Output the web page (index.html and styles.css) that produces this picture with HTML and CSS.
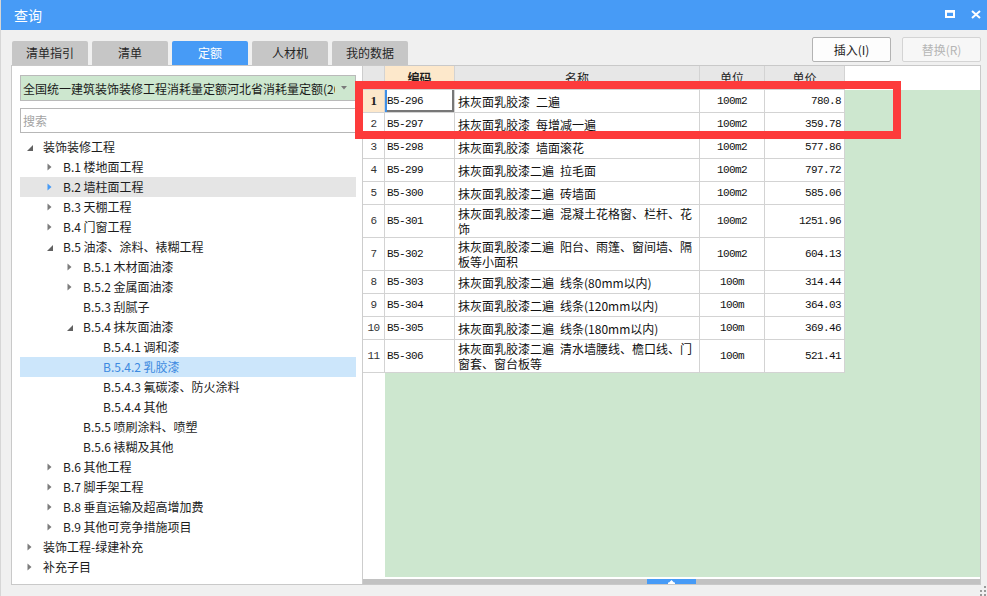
FILE: index.html
```html
<!DOCTYPE html>
<html lang="zh-CN">
<head>
<meta charset="utf-8">
<title>查询</title>
<link rel="stylesheet" href="styles.css">
</head>
<body>
<div class="app">
  <header class="titlebar">
    <span class="title">查询</span>
    <div class="win-btns">
      <svg class="ic-max" width="10" height="8" viewBox="0 0 10 8"><rect x="1" y="1.5" width="8" height="5.5" fill="none" stroke="#fff" stroke-width="2"/><rect x="0" y="0" width="10" height="2.5" fill="#fff"/></svg>
      <svg class="ic-close" width="10" height="9" viewBox="0 0 10 9"><path d="M1 1L9 8M9 1L1 8" stroke="#fff" stroke-width="2" fill="none"/></svg>
    </div>
  </header>

  <div class="toolbar">
    <div class="tabs">
      <div class="tab">清单指引</div>
      <div class="tab">清单</div>
      <div class="tab active">定额</div>
      <div class="tab">人材机</div>
      <div class="tab">我的数据</div>
    </div>
    <div class="btns">
      <div class="btn">插入(I)</div>
      <div class="btn disabled">替换(R)</div>
    </div>
  </div>

  <main class="content">
    <aside class="left">
      <div class="dropdown">
        <span class="dd-text">全国统一建筑装饰装修工程消耗量定额河北省消耗量定额(2012)</span>
        <span class="dd-arrow"><svg width="6" height="4" viewBox="0 0 6 4"><path d="M0 0H6L3 3.5Z" fill="#7a7a7a"/></svg></span>
      </div>
      <div class="search">搜索</div>
      <ul class="tree">
        <li class="node l0"><span class="tg"><svg class="exp" width="6" height="6" viewBox="0 0 6 6"><path d="M6 0V6H0Z"/></svg></span>装饰装修工程</li>
        <li class="node l1"><span class="tg"><svg class="col" width="5" height="8" viewBox="0 0 5 8"><path d="M0.5 0.5L4.5 4L0.5 7.5Z"/></svg></span>B.1 楼地面工程</li>
        <li class="node l1 hover"><span class="tg"><svg class="col" width="5" height="8" viewBox="0 0 5 8"><path d="M0.5 0.5L4.5 4L0.5 7.5Z"/></svg></span>B.2 墙柱面工程</li>
        <li class="node l1"><span class="tg"><svg class="col" width="5" height="8" viewBox="0 0 5 8"><path d="M0.5 0.5L4.5 4L0.5 7.5Z"/></svg></span>B.3 天棚工程</li>
        <li class="node l1"><span class="tg"><svg class="col" width="5" height="8" viewBox="0 0 5 8"><path d="M0.5 0.5L4.5 4L0.5 7.5Z"/></svg></span>B.4 门窗工程</li>
        <li class="node l1"><span class="tg"><svg class="exp" width="6" height="6" viewBox="0 0 6 6"><path d="M6 0V6H0Z"/></svg></span>B.5 油漆、涂料、裱糊工程</li>
        <li class="node l2"><span class="tg"><svg class="col" width="5" height="8" viewBox="0 0 5 8"><path d="M0.5 0.5L4.5 4L0.5 7.5Z"/></svg></span>B.5.1 木材面油漆</li>
        <li class="node l2"><span class="tg"><svg class="col" width="5" height="8" viewBox="0 0 5 8"><path d="M0.5 0.5L4.5 4L0.5 7.5Z"/></svg></span>B.5.2 金属面油漆</li>
        <li class="node l2"><span class="tg"></span>B.5.3 刮腻子</li>
        <li class="node l2"><span class="tg"><svg class="exp" width="6" height="6" viewBox="0 0 6 6"><path d="M6 0V6H0Z"/></svg></span>B.5.4 抹灰面油漆</li>
        <li class="node l3"><span class="tg"></span>B.5.4.1 调和漆</li>
        <li class="node l3 selected"><span class="tg"></span>B.5.4.2 乳胶漆</li>
        <li class="node l3"><span class="tg"></span>B.5.4.3 氟碳漆、防火涂料</li>
        <li class="node l3"><span class="tg"></span>B.5.4.4 其他</li>
        <li class="node l2"><span class="tg"></span>B.5.5 喷刷涂料、喷塑</li>
        <li class="node l2"><span class="tg"></span>B.5.6 裱糊及其他</li>
        <li class="node l1"><span class="tg"><svg class="col" width="5" height="8" viewBox="0 0 5 8"><path d="M0.5 0.5L4.5 4L0.5 7.5Z"/></svg></span>B.6 其他工程</li>
        <li class="node l1"><span class="tg"><svg class="col" width="5" height="8" viewBox="0 0 5 8"><path d="M0.5 0.5L4.5 4L0.5 7.5Z"/></svg></span>B.7 脚手架工程</li>
        <li class="node l1"><span class="tg"><svg class="col" width="5" height="8" viewBox="0 0 5 8"><path d="M0.5 0.5L4.5 4L0.5 7.5Z"/></svg></span>B.8 垂直运输及超高增加费</li>
        <li class="node l1"><span class="tg"><svg class="col" width="5" height="8" viewBox="0 0 5 8"><path d="M0.5 0.5L4.5 4L0.5 7.5Z"/></svg></span>B.9 其他可竞争措施项目</li>
        <li class="node l0"><span class="tg"><svg class="col" width="5" height="8" viewBox="0 0 5 8"><path d="M0.5 0.5L4.5 4L0.5 7.5Z"/></svg></span>装饰工程-绿建补充</li>
        <li class="node l0"><span class="tg"><svg class="col" width="5" height="8" viewBox="0 0 5 8"><path d="M0.5 0.5L4.5 4L0.5 7.5Z"/></svg></span>补充子目</li>
      </ul>
    </aside>

    <section class="right">
      <div class="row thead">
        <div class="c hnum"></div>
        <div class="c hsel">编码</div>
        <div class="c">名称</div>
        <div class="c">单位</div>
        <div class="c">单价</div>
        <div class="c ext"></div>
      </div>
      <div class="tbody">
        <div class="row">
          <div class="c num cur">1</div><div class="c code active">B5-296</div><div class="c name">抹灰面乳胶漆&ensp;二遍</div><div class="c unit">100m2</div><div class="c price">780.8</div><div class="c ext"></div>
        </div>
        <div class="row">
          <div class="c num">2</div><div class="c code">B5-297</div><div class="c name">抹灰面乳胶漆&ensp;每增减一遍</div><div class="c unit">100m2</div><div class="c price">359.78</div><div class="c ext"></div>
        </div>
        <div class="row">
          <div class="c num">3</div><div class="c code">B5-298</div><div class="c name">抹灰面乳胶漆&ensp;墙面滚花</div><div class="c unit">100m2</div><div class="c price">577.86</div><div class="c ext"></div>
        </div>
        <div class="row">
          <div class="c num">4</div><div class="c code">B5-299</div><div class="c name">抹灰面乳胶漆二遍&ensp;拉毛面</div><div class="c unit">100m2</div><div class="c price">797.72</div><div class="c ext"></div>
        </div>
        <div class="row">
          <div class="c num">5</div><div class="c code">B5-300</div><div class="c name">抹灰面乳胶漆二遍&ensp;砖墙面</div><div class="c unit">100m2</div><div class="c price">585.06</div><div class="c ext"></div>
        </div>
        <div class="row tall">
          <div class="c num">6</div><div class="c code">B5-301</div><div class="c name multi"><span class="ln">抹灰面乳胶漆二遍&ensp;混凝土花格窗、栏杆、花</span><span class="ln">饰</span></div><div class="c unit">100m2</div><div class="c price">1251.96</div><div class="c ext"></div>
        </div>
        <div class="row tall">
          <div class="c num">7</div><div class="c code">B5-302</div><div class="c name multi"><span class="ln">抹灰面乳胶漆二遍&ensp;阳台、雨篷、窗间墙、隔</span><span class="ln">板等小面积</span></div><div class="c unit">100m2</div><div class="c price">604.13</div><div class="c ext"></div>
        </div>
        <div class="row">
          <div class="c num">8</div><div class="c code">B5-303</div><div class="c name">抹灰面乳胶漆二遍&ensp;线条(80mm以内)</div><div class="c unit">100m</div><div class="c price">314.44</div><div class="c ext"></div>
        </div>
        <div class="row">
          <div class="c num">9</div><div class="c code">B5-304</div><div class="c name">抹灰面乳胶漆二遍&ensp;线条(120mm以内)</div><div class="c unit">100m</div><div class="c price">364.03</div><div class="c ext"></div>
        </div>
        <div class="row">
          <div class="c num">10</div><div class="c code">B5-305</div><div class="c name">抹灰面乳胶漆二遍&ensp;线条(180mm以内)</div><div class="c unit">100m</div><div class="c price">369.46</div><div class="c ext"></div>
        </div>
        <div class="row tall">
          <div class="c num">11</div><div class="c code">B5-306</div><div class="c name multi"><span class="ln">抹灰面乳胶漆二遍&ensp;清水墙腰线、檐口线、门</span><span class="ln">窗套、窗台板等</span></div><div class="c unit">100m</div><div class="c price">521.41</div><div class="c ext"></div>
        </div>
      </div>
      <div class="filler"><div class="fill-num"></div><div class="fill-green"></div></div>
      <div class="hscroll"><div class="thumb" style="margin-left:284px"><svg width="7" height="4" viewBox="0 0 7 4"><path d="M3.5 0L6 2.5H7V4H0V2.5H1Z" fill="#fff"/></svg></div></div>
    </section>
  </main>
</div>
<div class="red-mark"></div>
<svg class="grip" width="8" height="11" viewBox="0 0 8 11"><rect x="5" y="1" width="2" height="2" fill="#9a9a9a"/><rect x="5" y="5" width="2" height="2" fill="#9a9a9a"/><rect x="1" y="5" width="2" height="2" fill="#9a9a9a"/><rect x="5" y="9" width="2" height="2" fill="#9a9a9a"/><rect x="1" y="9" width="2" height="2" fill="#9a9a9a"/></svg>
</body>
</html>
```

FILE: styles.css
```css
* { box-sizing: border-box; }
html, body { margin: 0; padding: 0; }
body {
  width: 987px;
  height: 596px;
  overflow: hidden;
  background: #f0f0f0;
  font-family: "Noto Sans CJK SC", "Noto Sans", sans-serif;
  font-size: 12px;
  color: #1e1e1e;
}
.app {
  display: flex;
  flex-direction: column;
  height: 596px;
  border-left: 1px solid #d6d6d6;
}
.titlebar {
  height: 30px;
  flex: none;
  background: #479bf6;
  display: flex;
  align-items: center;
  justify-content: space-between;
  padding: 0 6px 0 13px;
  color: #fff;
}
.title { font-size: 14px; line-height: 30px; }
.win-btns { display: flex; align-items: center; gap: 16px; margin-top: -2px; }
.win-btns svg { display: block; }

.toolbar {
  height: 35px;
  flex: none;
  display: flex;
  align-items: flex-end;
  justify-content: space-between;
  padding: 0 6px 0 11px;
}
.tabs { display: flex; gap: 4px; }
.tab {
  width: 76px;
  height: 24px;
  background: #c6c6c6;
  border-radius: 2px 2px 0 0;
  text-align: center;
  line-height: 24px;
  color: #262626;
}
.tab.active { background: #479bf6; color: #fff; }
.btns { display: flex; gap: 11px; margin-bottom: 3px; }
.btn {
  width: 79px;
  height: 25px;
  border: 1px solid #b3b3b3;
  border-radius: 2px;
  background: #fdfdfd;
  text-align: center;
  line-height: 23px;
  color: #1e1e1e;
}
.btn.disabled { border-color: #d4d4d4; color: #b5b5b5; background: #f7f7f7; }

.content {
  width: 970px;
  height: 520px;
  margin-left: 10px;
  flex: none;
  border: 1px solid #c9c9c9;
  background: #fff;
  display: flex;
}

/* left panel */
.left {
  width: 350px;
  flex: none;
  padding: 9px 6px 0 8px;
  display: flex;
  flex-direction: column;
}
.dropdown {
  height: 26px;
  border: 1px solid #bababa;
  background: #cde7cf;
  display: flex;
  align-items: center;
}
.dd-text {
  flex: 1;
  min-width: 0;
  overflow: hidden;
  white-space: nowrap;
  padding-left: 2px;
  color: #1a1a1a;
}
.dd-arrow { width: 20px; flex: none; display: flex; justify-content: center; padding-right: 2px; }
.dd-arrow svg { display: block; }
.search {
  height: 25px;
  margin-top: 7px;
  border: 1px solid #b7b7b7;
  padding-left: 2px;
  line-height: 23px;
  color: #a3a3a3;
}
.tree { list-style: none; margin: 4px 0 0; padding: 0; }
.node {
  height: 20px;
  line-height: 20px;
  display: flex;
  align-items: center;
  white-space: nowrap;
  color: #1c1c1c;
}
.node.l0 { padding-left: 7px; }
.node.l1 { padding-left: 27px; }
.node.l2 { padding-left: 47px; }
.node.l3 { padding-left: 67px; }
.tg { width: 16px; flex: none; display: flex; align-items: center; }
.tg svg { display: block; }
.tg .exp { fill: #626262; margin-top: 1px; }
.tg .col { fill: #7c7c7c; }
.node.hover { background: #e5e5e5; }
.node.hover .col { fill: #479bf6; }
.node.selected { background: #cce6fb; color: #3d8ae0; }

/* right panel */
.right {
  flex: 1;
  border-left: 1px solid #cdcdcd;
  display: flex;
  flex-direction: column;
}
.row {
  display: grid;
  grid-template-columns: 22px 70px 245px 65px 80px 1fr;
  height: 23px;
}
.row.tall { height: 33px; }
.thead { height: 24px; }
.c {
  border-right: 1px solid #d3d3d3;
  border-bottom: 1px solid #d3d3d3;
  display: flex;
  align-items: center;
  white-space: nowrap;
  overflow: hidden;
  background: #fff;
}
.thead .c { background: #e7e7e7; justify-content: center; color: #1e1e1e; }
.thead .c.hsel { background: #fde8cb; font-weight: bold; }
.thead .c.ext, .c.ext { border: none; }
.thead .c.ext { background: #fff; }
.tbody .c.ext { background: #cde7cf; }
.num {
  justify-content: center;
  font-family: "Liberation Mono", monospace;
  font-size: 11px;
  letter-spacing: -0.6px;
  color: #333;
}
.num.cur { background: #fde8cb; font-family: "Liberation Serif", serif; font-weight: bold; font-size: 13px; color: #222; }
.code, .unit, .price {
  font-family: "Liberation Mono", monospace;
  font-size: 11px;
  letter-spacing: -0.6px;
  color: #111;
}
.code { padding-left: 2px; }
.code.active { box-shadow: inset 2px 0 0 #3f8fe6, inset -2px -2px 0 #777; }
.unit { justify-content: center; }
.price { justify-content: flex-end; padding-right: 3px; }
.name { padding-left: 3px; color: #111; }
.name.multi {
  flex-direction: column;
  align-items: flex-start;
  justify-content: flex-start;
  padding-top: 1px;
  overflow: visible;
}
.ln { display: block; line-height: 15px; height: 15px; }

.filler { flex: 1; display: flex; }
.fill-num { width: 22px; flex: none; background: #fff; }
.fill-green { flex: 1; background: #cde7cf; }
.hscroll {
  height: 5px;
  margin-top: 2px;
  background: #c2c2c2;
  display: flex;
}
.thumb {
  width: 49px;
  height: 5px;
  background: #479bf6;
  display: flex;
  justify-content: center;
  align-items: center;
}
.thumb svg { display: block; }

.red-mark {
  position: absolute;
  left: 355px;
  top: 81px;
  width: 546px;
  height: 58px;
  border: 8px solid #fd3b3b;
}
.grip { position: absolute; right: 0; bottom: 0; display: block; }
```
